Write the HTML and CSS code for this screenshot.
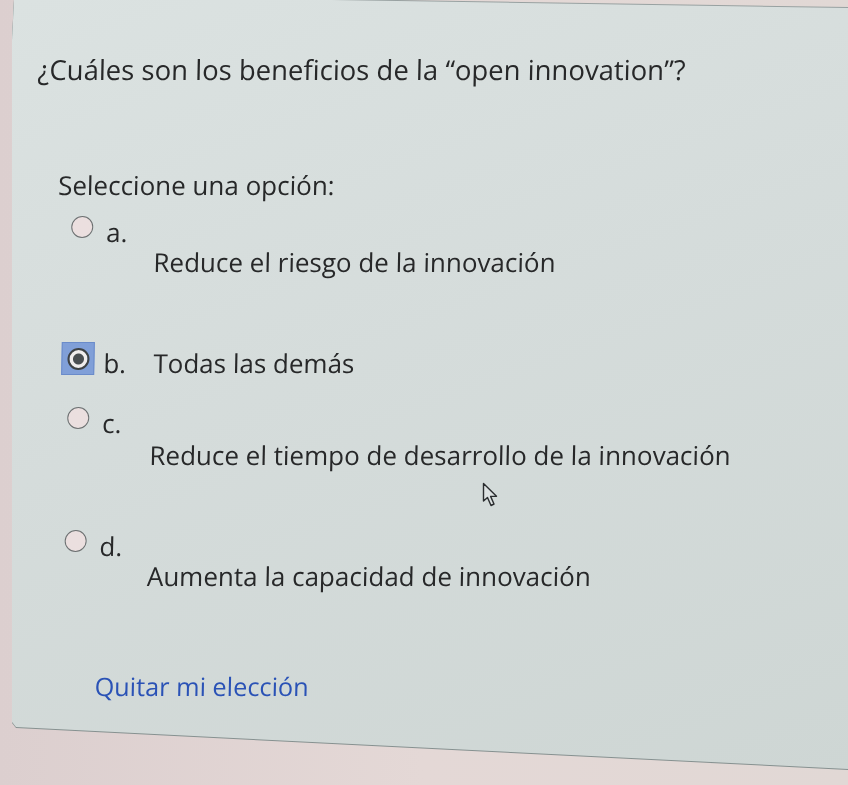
FILE: index.html
```html
<!DOCTYPE html>
<html lang="es">
<head>
<meta charset="utf-8">
<title>Pregunta</title>
<link rel="stylesheet" href="styles.css">
</head>
<body>
<div class="frame">
  <div class="panel">
    <div class="content">
      <p class="question">¿Cuáles son los beneficios de la “open innovation”?</p>
      <p class="prompt">Seleccione una opción:</p>
      <div class="answers">
        <div class="option opt-a">
          <span class="radio"></span>
          <span class="letter">a.</span>
          <span class="text low">Reduce el riesgo de la innovación</span>
        </div>
        <div class="option opt-b">
          <span class="focus"><span class="radio checked"></span></span>
          <span class="letter">b.</span>
          <span class="text">Todas las demás</span>
        </div>
        <div class="option opt-c">
          <span class="radio"></span>
          <span class="letter">c.</span>
          <span class="text low">Reduce el tiempo de desarrollo de la innovación</span>
        </div>
        <div class="option opt-d">
          <span class="radio"></span>
          <span class="letter">d.</span>
          <span class="text low">Aumenta la capacidad de innovación</span>
        </div>
      </div>
      <a class="clear" href="#">Quitar mi elección</a>
    </div>
  </div>
  <svg class="cursor" width="18" height="26" viewBox="0 0 18 26"><path d="M1.5 1.5 L1.5 19 L5.5 15.5 L9 23.5 L12 22 L8.6 14.4 L14.5 14.2 Z" fill="#dde2e2" stroke="#2a2d2f" stroke-width="1.4" stroke-linejoin="round"/></svg>
</div>
</body>
</html>
```

FILE: styles.css
```css
* { box-sizing: border-box; }
html, body { margin: 0; padding: 0; }
body {
  width: 848px;
  height: 785px;
  overflow: hidden;
  background: linear-gradient(90deg, #dccfcf 0%, #e4d8d6 50%, #e1d8d5 100%);
  font-family: "Open Sans", "Noto Sans", sans-serif;
  color: #272829;
}
.frame {
  position: relative;
  height: 785px;
  filter: drop-shadow(0 1.5px 0 #869190) drop-shadow(0 -1px 0 #98a1a1);
}
.panel {
  margin-left: 12px;
  height: 775px;
  background: linear-gradient(160deg, #dbe2e1 0%, #d5dcdb 45%, #ced6d4 100%);
  clip-path: polygon(2px 0, 320px 0, 836px 8px, 836px 769px, 4px 727px, 0 722px, 0 40px);
}
.content {
  padding: 52px 0 0 27px;
  transform: skewX(-1.2deg);
  transform-origin: 0 0;
}
.question {
  margin: 0;
  font-size: 27.5px;
  line-height: 36px;
}
.prompt {
  margin: 80px 0 0 23px;
  font-size: 26px;
  line-height: 34px;
}
.answers {
  margin: 13px 0 0 37px;
  display: flex;
  flex-direction: column;
}
.option {
  display: flex;
  align-items: flex-start;
  font-size: 26px;
  line-height: 34px;
}
.radio {
  width: 22px;
  height: 22px;
  border-radius: 50%;
  border: 1.5px solid #6d7172;
  background: #ebdfdf;
  margin-top: 1px;
  flex: none;
}
.radio.checked {
  margin-top: 0;
  background: radial-gradient(circle, #4a4e51 0 5px, #f0eded 6px);
  border: 2px solid #3e4245;
}
.focus {
  width: 33px;
  height: 33px;
  margin: -4px 0 0 -7px;
  background: #809fd8;
  display: flex;
  align-items: center;
  justify-content: center;
  border: 1px solid #6a8bca;
  flex: none;
}
.letter {
  margin-left: 13px;
  width: 48px;
  flex: none;
}
.text.low { margin-top: 30px; }
.opt-b { margin-top: 67px; }
.opt-b .letter { margin-left: 9px; width: 50px; }
.opt-c { margin-top: 26px; }
.opt-c .text.low { margin-top: 32px; }
.opt-d { margin-top: 57px; }
.clear {
  display: inline-block;
  margin: 76px 0 0 70px;
  font-size: 25.3px;
  line-height: 34px;
  color: #2a52b6;
  text-decoration: none;
}
.cursor {
  position: absolute;
  left: 482px;
  top: 482px;
}
```
